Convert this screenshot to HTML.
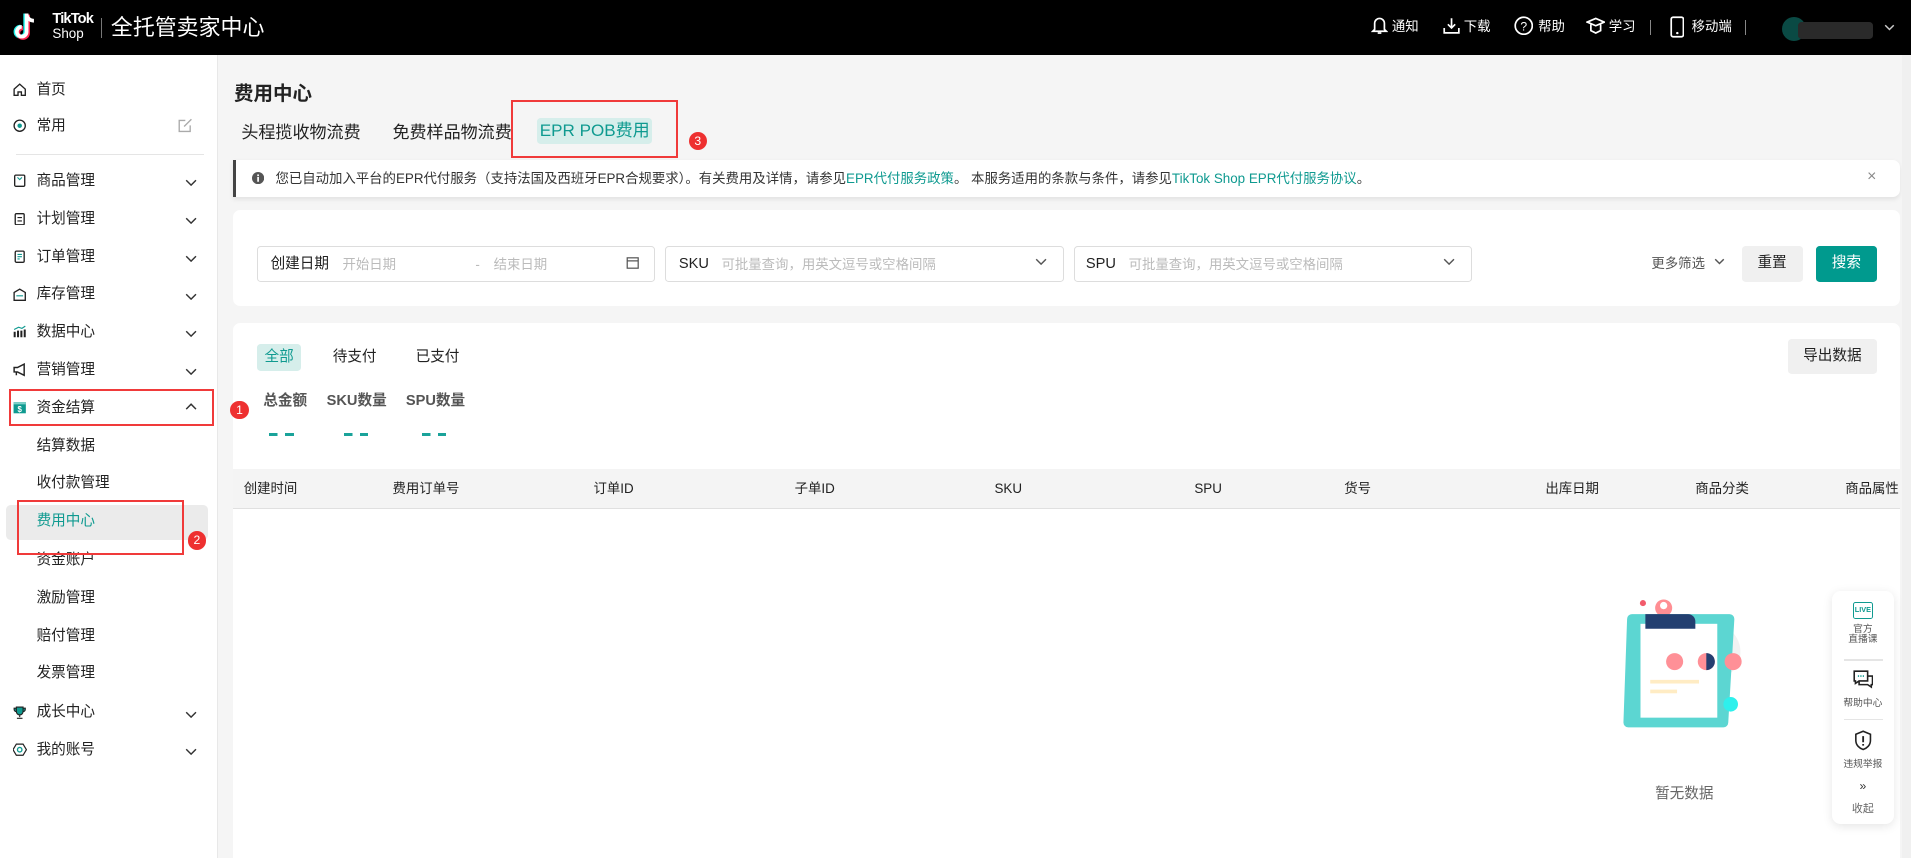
<!DOCTYPE html>
<html><head><meta charset="utf-8">
<style>
html,body{margin:0;padding:0;width:1911px;height:858px;overflow:hidden;background:#f5f5f5}
#root{zoom:1.21875;position:relative;width:1568px;height:704px;font-family:"Liberation Sans","Noto Sans CJK SC",sans-serif;color:#222;font-size:12px}
.a{position:absolute;white-space:nowrap}
.hdr{position:absolute;left:0;top:0;width:1568px;height:45px;background:#000;color:#fff}
.side{position:absolute;left:0;top:45px;width:178px;height:659px;background:#fff;border-right:1px solid #e8e8e8}
.mi{position:absolute;left:30px;font-size:12px;color:#222;line-height:14px}
.ic{position:absolute;left:11px;width:11px;height:11px}
.chev{position:absolute;left:152px;width:10px;height:6px}
.card{position:absolute;background:#fff;border-radius:6px}
.inp{position:absolute;top:202px;height:28px;border:1px solid #ddd;border-radius:3px;background:#fff}
.ph{color:#bbb}
.th{position:absolute;top:393px;font-size:11px;color:#222;line-height:16px}
.red{position:absolute;border:2px solid #f03a3a}
.badge{position:absolute;width:15px;height:15px;border-radius:50%;background:#ee3030;color:#fff;font-size:10px;text-align:center;line-height:15px}
.hi{position:absolute;top:14px;font-size:11px;color:#fff;line-height:16px}
.dash{position:absolute;top:355px;width:20px;height:3px;background:linear-gradient(90deg,#1aa39a 7px,transparent 7px,transparent 13px,#1aa39a 13px)}
</style></head><body><div id="root">

<div class="hdr">
 <svg class="a" style="left:10px;top:9px" width="22" height="26" viewBox="0 0 22 26"><path d="M12 2v15a4 4 0 1 1-4-4" fill="none" stroke="#25f4ee" stroke-width="3.4" transform="translate(-1,0)"/><path d="M12 2v15a4 4 0 1 1-4-4" fill="none" stroke="#fe2c55" stroke-width="3.4" transform="translate(1,1)"/><path d="M12 2v15a4 4 0 1 1-4-4M12 2c0 4 3 6 6 6" fill="none" stroke="#fff" stroke-width="3"/></svg>
 <div class="a" style="left:43px;top:10px;font-size:12px;font-weight:bold;line-height:12px;letter-spacing:-0.7px">TikTok</div>
 <div class="a" style="left:43px;top:22px;font-size:11px;line-height:12px">Shop</div>
 <div class="a" style="left:83px;top:15px;width:1px;height:16px;background:#777"></div>
 <div class="a" style="left:91px;top:11px;font-size:18px;line-height:24px">全托管卖家中心</div>
 <svg class="a" style="left:1125px;top:13px" width="14" height="16" viewBox="0 0 14 16"><path d="M3 11V6a4 4 0 0 1 8 0v5l1.5 1.5h-11z M5.5 14h3" fill="none" stroke="#fff" stroke-width="1.4"/></svg><div class="hi" style="left:1142px">通知</div>
 <svg class="a" style="left:1184px;top:14px" width="14" height="14" viewBox="0 0 14 14"><path d="M7 1v8M4 6l3 3 3-3M1 9v4h12V9" fill="none" stroke="#fff" stroke-width="1.4"/></svg><div class="hi" style="left:1201px">下载</div>
 <svg class="a" style="left:1242px;top:13px" width="16" height="16" viewBox="0 0 16 16"><circle cx="8" cy="8" r="7" fill="none" stroke="#fff" stroke-width="1.4"/><text x="8" y="12" font-size="10" fill="#fff" text-anchor="middle" font-family="Liberation Sans">?</text></svg><div class="hi" style="left:1262px">帮助</div>
 <svg class="a" style="left:1301px;top:13px" width="16" height="16" viewBox="0 0 16 16"><path d="M1 5l7-3 7 3-7 3z M4 7v5l4 2 4-2V7" fill="none" stroke="#fff" stroke-width="1.4"/></svg><div class="hi" style="left:1320px">学习</div>
 <div class="a" style="left:1354px;top:16px;width:1px;height:13px;background:#888"></div>
 <svg class="a" style="left:1370px;top:13px" width="12" height="18" viewBox="0 0 12 18"><rect x="1" y="1" width="10" height="16" rx="1.5" fill="none" stroke="#fff" stroke-width="1.4"/><circle cx="6" cy="14" r="1" fill="#fff"/></svg><div class="hi" style="left:1388px">移动端</div>
 <div class="a" style="left:1432px;top:16px;width:1px;height:13px;background:#888"></div>
 <div class="a" style="left:1462px;top:14px;width:20px;height:20px;border-radius:10px;background:#0a4a44"></div>
 <div class="a" style="left:1475px;top:18px;width:62px;height:14px;background:#2a2a2a;border-radius:3px"></div>
 <svg class="a" style="left:1546px;top:20px" width="9" height="6" viewBox="0 0 9 6"><path d="M1 1l3.5 3.5L8 1" fill="none" stroke="#ccc" stroke-width="1.2"/></svg>
</div>

<div class="side"></div>
<svg class="ic" style="top:68px" viewBox="0 0 12 12"><path d="M1 5.5L6 1l5 4.5V11H7.5V8h-3v3H1z" fill="none" stroke="#222" stroke-width="1.2"/></svg><div class="mi" style="top:67px">首页</div>
<svg class="ic" style="top:98px" viewBox="0 0 12 12"><circle cx="6" cy="6" r="5" fill="none" stroke="#222" stroke-width="1.2"/><circle cx="6" cy="6" r="2" fill="#0f9a90"/></svg><div class="mi" style="top:97px">常用</div>
<svg class="a" style="left:146px;top:97px" width="12" height="12" viewBox="0 0 12 12"><path d="M10 6v5H1V2h5M5 7l6-6" fill="none" stroke="#aaa" stroke-width="1.1"/></svg>
<div class="a" style="left:13px;top:126px;width:154px;height:1px;background:#e5e5e5"></div>

<svg class="ic" style="top:143px" viewBox="0 0 12 12"><rect x="1.5" y="1" width="9" height="10" rx="1" fill="none" stroke="#222" stroke-width="1.2"/><path d="M4 3l2 2 2-2" fill="none" stroke="#0f9a90" stroke-width="1"/></svg><div class="mi" style="top:142px">商品管理</div>
<svg class="ic" style="top:174px" viewBox="0 0 12 12"><rect x="2" y="1.5" width="8" height="10" rx="1" fill="none" stroke="#222" stroke-width="1.2"/><path d="M4 5h4M4 8h4" stroke="#222"/></svg><div class="mi" style="top:173px">计划管理</div>
<svg class="ic" style="top:205px" viewBox="0 0 12 12"><rect x="2" y="1" width="8" height="10" rx="1" fill="none" stroke="#222" stroke-width="1.2"/><path d="M4 4h4M4 6h4M4 8h2" stroke="#0f9a90"/></svg><div class="mi" style="top:204px">订单管理</div>
<svg class="ic" style="top:236px" viewBox="0 0 12 12"><path d="M1 4l5-3 5 3v7H1z" fill="none" stroke="#222" stroke-width="1.2"/><path d="M3 7h6" stroke="#0f9a90"/></svg><div class="mi" style="top:235px">库存管理</div>
<svg class="ic" style="top:267px" viewBox="0 0 12 12"><path d="M1.5 11V6M4.5 11V5M7.5 11V5M10.5 11V4" stroke="#222" stroke-width="1.8"/><path d="M1 4l4-2 3 1 3-2" fill="none" stroke="#0f9a90"/></svg><div class="mi" style="top:266px">数据中心</div>
<svg class="ic" style="top:298px" viewBox="0 0 12 12"><path d="M1 4h3l6-3v10L4 8H1z M3 8v3" fill="none" stroke="#222" stroke-width="1.3"/></svg><div class="mi" style="top:297px">营销管理</div>
<svg class="ic" style="top:329px" viewBox="0 0 12 12"><rect x="0.5" y="1" width="11" height="10" fill="#0f9a90"/><rect x="0.5" y="1" width="11" height="2" fill="#7fd0c9"/><text x="6" y="10" font-size="7" fill="#fff" text-anchor="middle" font-family="Liberation Sans" font-weight="bold">$</text></svg><div class="mi" style="top:328px">资金结算</div>
<svg class="chev" style="top:331px" viewBox="0 0 10 6"><path d="M1 5l4-4 4 4" fill="none" stroke="#333" stroke-width="1.2"/></svg>

<div class="mi" style="top:359px">结算数据</div>
<div class="mi" style="top:390px">收付款管理</div>
<div class="a" style="left:5px;top:414px;width:166px;height:29px;background:#ebebeb;border-radius:4px"></div>
<div class="mi" style="top:421px;color:#0f9a90">费用中心</div>
<div class="mi" style="top:453px">资金账户</div>
<div class="mi" style="top:484px">激励管理</div>
<div class="mi" style="top:515px">赔付管理</div>
<div class="mi" style="top:546px">发票管理</div>
<svg class="ic" style="top:579px" viewBox="0 0 12 12"><path d="M3 1h6v4a3 3 0 0 1-6 0z M3 2H1v1a2 2 0 0 0 2 2M9 2h2v1a2 2 0 0 1-2 2M6 8v2M3.5 11h5" fill="#0f9a90" stroke="#222" stroke-width="1"/></svg><div class="mi" style="top:578px">成长中心</div>
<svg class="ic" style="top:610px" viewBox="0 0 12 12"><path d="M3 1h6l3 5-3 5H3L0 6z" fill="none" stroke="#222" stroke-width="1.1"/><circle cx="6" cy="6" r="2" fill="none" stroke="#0f9a90" stroke-width="1.2"/></svg><div class="mi" style="top:609px">我的账号</div>

<svg class="chev" style="top:147px" viewBox="0 0 10 6"><path d="M1 1l4 4 4-4" fill="none" stroke="#333" stroke-width="1.2"/></svg>
<svg class="chev" style="top:178px" viewBox="0 0 10 6"><path d="M1 1l4 4 4-4" fill="none" stroke="#333" stroke-width="1.2"/></svg>
<svg class="chev" style="top:209px" viewBox="0 0 10 6"><path d="M1 1l4 4 4-4" fill="none" stroke="#333" stroke-width="1.2"/></svg>
<svg class="chev" style="top:240px" viewBox="0 0 10 6"><path d="M1 1l4 4 4-4" fill="none" stroke="#333" stroke-width="1.2"/></svg>
<svg class="chev" style="top:271px" viewBox="0 0 10 6"><path d="M1 1l4 4 4-4" fill="none" stroke="#333" stroke-width="1.2"/></svg>
<svg class="chev" style="top:302px" viewBox="0 0 10 6"><path d="M1 1l4 4 4-4" fill="none" stroke="#333" stroke-width="1.2"/></svg>
<svg class="chev" style="top:583px" viewBox="0 0 10 6"><path d="M1 1l4 4 4-4" fill="none" stroke="#333" stroke-width="1.2"/></svg>
<svg class="chev" style="top:614px" viewBox="0 0 10 6"><path d="M1 1l4 4 4-4" fill="none" stroke="#333" stroke-width="1.2"/></svg>

<div class="a" style="left:192px;top:63px;font-size:16px;font-weight:bold;color:#222">费用中心</div>
<div class="a" style="left:198px;top:99px;font-size:14px;line-height:20px">头程揽收物流费</div>
<div class="a" style="left:322px;top:99px;font-size:14px;line-height:20px">免费样品物流费</div>
<div class="a" style="left:441px;top:97px;width:94px;height:21px;background:#d6eeeb;border-radius:3px;color:#0f9a90;font-size:14px;text-align:center;line-height:21px">EPR POB费用</div>

<div class="card" style="left:191px;top:131px;width:1368px;height:31px;border-radius:0 6px 6px 0;box-shadow:0 2px 4px rgba(0,0,0,0.08);border-left:3px solid #444;box-sizing:border-box"></div>
<svg class="a" style="left:207px;top:141px" width="10" height="10" viewBox="0 0 10 10"><circle cx="5" cy="5" r="5" fill="#555"/><rect x="4.3" y="4" width="1.4" height="4" fill="#fff"/><rect x="4.3" y="2" width="1.4" height="1.3" fill="#fff"/></svg>
<div class="a" style="left:226px;top:139px;font-size:11px;color:#333;line-height:16px">您已自动加入平台的EPR代付服务（支持法国及西班牙EPR合规要求）。有关费用及详情，请参见<span style="color:#0f9a90">EPR代付服务政策</span>。 本服务适用的条款与条件，请参见<span style="color:#0f9a90">TikTok Shop EPR代付服务协议</span>。</div>
<div class="a" style="left:1532px;top:138px;font-size:13px;color:#888">×</div>

<div class="card" style="left:191px;top:172px;width:1368px;height:79px"></div>
<div class="inp" style="left:211px;width:325px"></div>
<div class="a" style="left:222px;top:208px;font-size:12px;line-height:17px">创建日期</div>
<div class="a ph" style="left:281px;top:209px;font-size:11px;line-height:16px">开始日期</div>
<div class="a ph" style="left:390px;top:209px;font-size:11px;line-height:16px">-</div>
<div class="a ph" style="left:405px;top:209px;font-size:11px;line-height:16px">结束日期</div>
<svg class="a" style="left:514px;top:210px" width="11" height="11" viewBox="0 0 11 11"><rect x="1" y="1.5" width="9" height="8.5" fill="none" stroke="#555"/><path d="M1 4h9" stroke="#555"/></svg>
<div class="inp" style="left:546px;width:325px"></div>
<div class="a" style="left:557px;top:208px;font-size:12px;line-height:17px">SKU</div>
<div class="a ph" style="left:592px;top:209px;font-size:11px;line-height:16px">可批量查询，用英文逗号或空格间隔</div>
<svg class="a" style="left:849px;top:212px" width="10" height="6" viewBox="0 0 10 6"><path d="M1 1l4 4 4-4" fill="none" stroke="#555" stroke-width="1.2"/></svg>
<div class="inp" style="left:881px;width:325px"></div>
<div class="a" style="left:891px;top:208px;font-size:12px;line-height:17px">SPU</div>
<div class="a ph" style="left:926px;top:209px;font-size:11px;line-height:16px">可批量查询，用英文逗号或空格间隔</div>
<svg class="a" style="left:1184px;top:212px" width="10" height="6" viewBox="0 0 10 6"><path d="M1 1l4 4 4-4" fill="none" stroke="#555" stroke-width="1.2"/></svg>
<div class="a" style="left:1355px;top:208px;font-size:11px;color:#555;line-height:16px">更多筛选</div>
<svg class="a" style="left:1406px;top:212px" width="9" height="6" viewBox="0 0 9 6"><path d="M1 1l3.5 3.5L8 1" fill="none" stroke="#555" stroke-width="1.2"/></svg>
<div class="a" style="left:1429px;top:202px;width:50px;height:29px;background:#f0f0f0;border-radius:3px;text-align:center;line-height:29px;font-size:12px">重置</div>
<div class="a" style="left:1490px;top:202px;width:50px;height:29px;background:#009a8e;border-radius:3px;text-align:center;line-height:29px;font-size:12px;color:#fff">搜索</div>

<div class="card" style="left:191px;top:265px;width:1368px;height:450px"></div>
<div class="a" style="left:211px;top:282px;width:36px;height:22px;background:#d6eeeb;border-radius:3px;color:#0f9a90;text-align:center;line-height:22px;font-size:12px">全部</div>
<div class="a" style="left:273px;top:285px;font-size:12px;line-height:17px">待支付</div>
<div class="a" style="left:341px;top:285px;font-size:12px;line-height:17px">已支付</div>
<div class="a" style="left:1467px;top:278px;width:73px;height:29px;background:#f0f0f0;border-radius:3px;text-align:center;line-height:29px;font-size:12px">导出数据</div>
<div class="a" style="left:216px;top:321px;font-size:12px;font-weight:bold;color:#555;line-height:17px">总金额</div>
<div class="a" style="left:268px;top:321px;font-size:12px;font-weight:bold;color:#555;line-height:17px">SKU数量</div>
<div class="a" style="left:333px;top:321px;font-size:12px;font-weight:bold;color:#555;line-height:17px">SPU数量</div>
<div class="dash" style="left:221px"></div>
<div class="dash" style="left:282px"></div>
<div class="dash" style="left:346px"></div>

<div class="a" style="left:191px;top:385px;width:1368px;height:32px;background:#f4f4f4;border-bottom:1px solid #e0e0e0"></div>
<div class="th" style="left:200px">创建时间</div>
<div class="th" style="left:322px">费用订单号</div>
<div class="th" style="left:487px">订单ID</div>
<div class="th" style="left:652px">子单ID</div>
<div class="th" style="left:816px">SKU</div>
<div class="th" style="left:980px">SPU</div>
<div class="th" style="left:1103px">货号</div>
<div class="th" style="left:1268px">出库日期</div>
<div class="th" style="left:1391px">商品分类</div>
<div class="th" style="left:1514px">商品属性</div>

<svg class="a" style="left:1330px;top:490px" width="100" height="110" viewBox="0 0 100 110">
 <circle cx="75" cy="45" r="23" fill="#f2f2f2"/>
 <circle cx="18" cy="5" r="2.5" fill="#f25b6b"/>
 <circle cx="35" cy="9" r="7" fill="#ff8e93"/><circle cx="35" cy="7" r="3" fill="#fff"/>
 <path d="M7 14h80a4 4 0 0 1 4 4l-5 85a4 4 0 0 1-4 4H4a4 4 0 0 1-4-4l3-85a4 4 0 0 1 4-4z" fill="#5cd6d2" transform="translate(2,0)"/>
 <rect x="16" y="22" width="63" height="77" fill="#fff"/>
 <path d="M22 14h35a6 6 0 0 1 6 6v6H22z" fill="#233f70" transform="translate(-2,0)"/>
 <circle cx="44" cy="53" r="7" fill="#ff9097"/><circle cx="70" cy="53" r="7" fill="#ff9097"/><circle cx="93" cy="53" r="7" fill="#ff9097" transform="translate(-1,0)"/>
 <path d="M70 46a7 7 0 0 1 0 14z" fill="#233f70"/>
 <rect x="24" y="68" width="40" height="3" fill="#ffecc4"/><rect x="24" y="76" width="22" height="3" fill="#ffecc4"/>
 <circle cx="90" cy="88" r="6" fill="#2ef0ec"/>
</svg>
<div class="a" style="left:1358px;top:642px;font-size:12px;color:#666">暂无数据</div>

<div class="a" style="left:1503px;top:485px;width:51px;height:191px;background:#fff;border-radius:7px;box-shadow:0 2px 8px rgba(0,0,0,0.1)"></div>
<div class="a" style="left:1520px;top:494px;width:17px;height:14px;border:1px solid #0f9a90;border-radius:2px;box-sizing:border-box;font-size:6px;font-weight:bold;color:#0f9a90;text-align:center;line-height:12px">LIVE</div>
<div class="a" style="left:1505px;top:513px;width:47px;text-align:center;font-size:8px;color:#555;line-height:8px">官方<br>直播课</div>
<div class="a" style="left:1513px;top:541px;width:32px;height:1px;background:#e5e5e5"></div>
<svg class="a" style="left:1520px;top:550px" width="17" height="16" viewBox="0 0 17 16"><path d="M1 1h11v8H5l-3 2V9H1z M5 9v3h7l3 2v-2h1V5h-4" fill="none" stroke="#222" stroke-width="1.3"/><path d="M4 5h1M6 5h1M8 5h1" stroke="#0f9a90" stroke-width="1.3"/></svg>
<div class="a" style="left:1505px;top:570px;width:47px;text-align:center;font-size:8px;color:#555">帮助中心</div>
<div class="a" style="left:1513px;top:590px;width:32px;height:1px;background:#e5e5e5"></div>
<svg class="a" style="left:1521px;top:599px" width="15" height="17" viewBox="0 0 15 17"><path d="M7.5 1l6 2.5v5c0 4-3 6.5-6 7.5-3-1-6-3.5-6-7.5v-5z" fill="none" stroke="#222" stroke-width="1.3"/><path d="M7.5 5v5M7.5 11.5v1.3" stroke="#222" stroke-width="1.5"/></svg>
<div class="a" style="left:1505px;top:620px;width:47px;text-align:center;font-size:8px;color:#555">违规举报</div>
<div class="a" style="left:1505px;top:639px;width:47px;text-align:center;font-size:10px;color:#333">»</div>
<div class="a" style="left:1505px;top:656px;width:47px;text-align:center;font-size:9px;color:#666">收起</div>
<div class="a" style="left:1561px;top:45px;width:7px;height:659px;background:#f0f0f0"></div>

<div class="red" style="left:7px;top:319px;width:165px;height:27px"></div>
<div class="red" style="left:14px;top:410px;width:134px;height:42px"></div>
<div class="red" style="left:419px;top:82px;width:134px;height:44px"></div>
<div class="badge" style="left:189px;top:329px">1</div>
<div class="badge" style="left:154px;top:436px">2</div>
<div class="badge" style="left:565px;top:108px">3</div>

</div></body></html>
